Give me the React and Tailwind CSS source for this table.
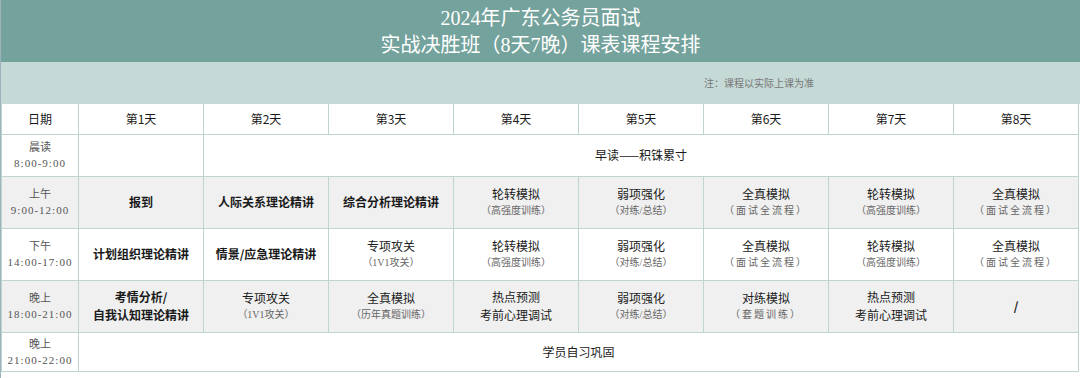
const days = ["第1天", "第2天", "第3天", "第4天", "第5天", "第6天", "第7天", "第8天"];

const rows = [
  {
    label: "上午",
    time: "9:00-12:00",
    gray: true,
    cells: [
      { t: "报到", bold: true },
      { t: "人际关系理论精讲", bold: true },
      { t: "综合分析理论精讲", bold: true },
      { t: "轮转模拟", s: "（高强度训练）" },
      { t: "弱项强化", s: "（对练/总结）" },
      { t: "全真模拟", s: "（面试全流程）", wide: true },
      { t: "轮转模拟", s: "（高强度训练）" },
      { t: "全真模拟", s: "（面试全流程）", wide: true },
    ],
  },
  {
    label: "下午",
    time: "14:00-17:00",
    cells: [
      { t: "计划组织理论精讲", bold: true },
      { t: "情景/应急理论精讲", bold: true },
      { t: "专项攻关", s: "（1V1攻关）" },
      { t: "轮转模拟", s: "（高强度训练）" },
      { t: "弱项强化", s: "（对练/总结）" },
      { t: "全真模拟", s: "（面试全流程）", wide: true },
      { t: "轮转模拟", s: "（高强度训练）" },
      { t: "全真模拟", s: "（面试全流程）", wide: true },
    ],
  },
  {
    label: "晚上",
    time: "18:00-21:00",
    gray: true,
    cells: [
      { t: "考情分析/", t2: "自我认知理论精讲", bold: true },
      { t: "专项攻关", s: "（1V1攻关）" },
      { t: "全真模拟", s: "（历年真题训练）" },
      { t: "热点预测", t2: "考前心理调试" },
      { t: "弱项强化", s: "（对练/总结）" },
      { t: "对练模拟", s: "（套题训练）", wide: true },
      { t: "热点预测", t2: "考前心理调试" },
      { t: "/", bold: true },
    ],
  },
];

const sans = "font-['Microsoft_YaHei','Noto_Sans_CJK_SC',sans-serif]";
const serif = "font-['Liberation_Serif','Noto_Sans_CJK_SC',serif]";
const cellBorder = "border border-[#bfd5d1]";

function TimeCell({ label, time }) {
  return (
    <td className={`${cellBorder} ${serif} text-center text-[11px] leading-[16px] text-[#555]`}>
      <div>{label}</div>
      <div className="tracking-[1px]">{time}</div>
    </td>
  );
}

function Cell({ c }) {
  return (
    <td className={`${cellBorder} text-center`}>
      <div className={`${sans} text-[12px] leading-[18px] text-[#1a1a1a] ${c.bold ? "font-bold" : ""}`}>{c.t}</div>
      {c.t2 && <div className={`${sans} text-[12px] leading-[18px] text-[#1a1a1a] ${c.bold ? "font-bold" : ""}`}>{c.t2}</div>}
      {c.s && (
        <div className={`${serif} text-[10px] leading-[16px] text-[#666] ${c.wide ? "tracking-[2px]" : ""}`}>{c.s}</div>
      )}
    </td>
  );
}

export default function App() {
  return (
    <div className="w-[1080px] h-[378px] bg-white border-l border-[#9db4bd] overflow-hidden">
      <div className="h-[62px] bg-[#74a29c] flex flex-col items-center justify-center pt-[1px]">
        <div className={`${serif} text-white text-[20px] leading-[27px]`}>2024年广东公务员面试</div>
        <div className={`${serif} text-white text-[20px] leading-[27px]`}>实战决胜班（8天7晚）课表课程安排</div>
      </div>
      <div className="h-[42px] bg-[#c5d9d6] flex items-center justify-end pr-[266px]">
        <span className={`${serif} text-[10px] text-[#777]`}>注：课程以实际上课为准</span>
      </div>
      <table className="w-[1078px] table-fixed border-collapse">
        <colgroup>
          <col className="w-[77px]" />
          {days.map((d) => (
            <col key={d} className="w-[125px]" />
          ))}
        </colgroup>
        <tbody>
          <tr className="h-[30px]">
            <td className={`${cellBorder} border-t-0 ${sans} text-center text-[12px] text-[#1a1a1a]`}>日期</td>
            {days.map((d) => (
              <td key={d} className={`${cellBorder} border-t-0 ${sans} text-center text-[12px] text-[#1a1a1a]`}>
                {d}
              </td>
            ))}
          </tr>
          <tr className="h-[42px]">
            <TimeCell label="晨读" time="8:00-9:00" />
            <td className={cellBorder}></td>
            <td colSpan={7} className={`${cellBorder} ${sans} text-center text-[12px] text-[#1a1a1a]`}>
              早读——积铢累寸
            </td>
          </tr>
          {rows.map((r) => (
            <tr key={r.time} className={`h-[52px] ${r.gray ? "bg-[#f0f0f0]" : "bg-white"}`}>
              <TimeCell label={r.label} time={r.time} />
              {r.cells.map((c, i) => (
                <Cell key={i} c={c} />
              ))}
            </tr>
          ))}
          <tr className="h-[39px]">
            <TimeCell label="晚上" time="21:00-22:00" />
            <td colSpan={8} className={`${cellBorder} ${sans} text-center text-[12px] text-[#1a1a1a]`}>
              学员自习巩固
            </td>
          </tr>
        </tbody>
      </table>
    </div>
  );
}
